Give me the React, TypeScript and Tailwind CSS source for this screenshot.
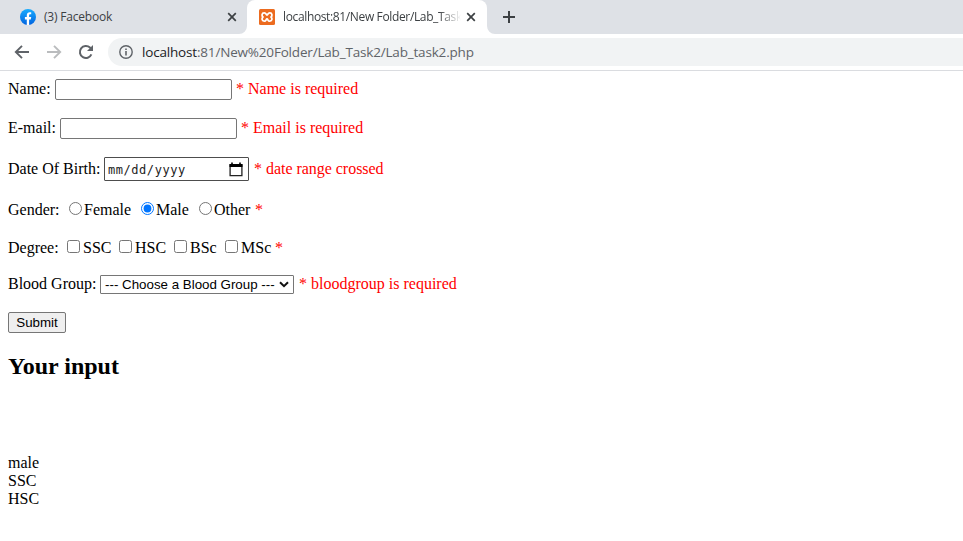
import type { ReactNode } from 'react';

function Row({ className, children }: { className: string; children: ReactNode }) {
  return <div className={`flex whitespace-pre ${className}`}>{children}</div>;
}

function CloseIcon() {
  return (
    <svg width="10" height="10" viewBox="0 0 10 10" className="shrink-0">
      <path d="M1.2 1.2 8.8 8.8M8.8 1.2 1.2 8.8" stroke="#3c4043" strokeWidth="1.7" fill="none" />
    </svg>
  );
}

function FacebookIcon() {
  return (
    <svg width="16" height="16" viewBox="0 0 16 16" className="shrink-0">
      <defs>
        <linearGradient id="fb" x1="0" y1="0" x2="0" y2="1">
          <stop offset="0" stopColor="#18acfe" />
          <stop offset="1" stopColor="#0163e0" />
        </linearGradient>
      </defs>
      <circle cx="8" cy="8" r="8" fill="url(#fb)" />
      <path d="M6.8 15.9v-5.5H4.9V8h1.9V6.3c0-2 1.2-3.1 2.9-3.1.8 0 1.5.1 1.5.1v1.9h-.9c-1 0-1.2.5-1.2 1.2V8h2.1l-.4 2.4H9.1v5.5Z" fill="#fff" />
    </svg>
  );
}

function XamppIcon() {
  return (
    <svg width="16" height="16" viewBox="0 0 16 16" className="shrink-0">
      <rect width="16" height="16" rx="1.5" fill="#ec6b1f" />
      <path d="M5.2 3.8C2.6 3.8 2.6 7 4 8 2.6 9 2.6 12.2 5.2 12.2 7.4 12.2 6.9 10 8 10S8.6 12.2 10.8 12.2C13.4 12.2 13.4 9 12 8 13.4 7 13.4 3.8 10.8 3.8 8.6 3.8 9.1 6 8 6S7.4 3.8 5.2 3.8Z" fill="none" stroke="#fff" strokeWidth="1.8" strokeLinejoin="round" />
    </svg>
  );
}

function Toolbar() {
  return (
    <div className="flex h-[37px] items-start border-b border-[#dadce0] bg-white pt-1">
      <svg width="108" height="28" viewBox="0 0 108 28" fill="none" className="shrink-0">
        <path d="M29 14H16.5M22 7.8 15.8 14l6.2 6.2" stroke="#5f6368" strokeWidth="1.9" />
        <path d="M47 14h12.5M54 7.8l6.2 6.2-6.2 6.2" stroke="#babcbe" strokeWidth="1.9" />
        <path d="M91.4 16.4A6 6 0 1 1 90 9.6l1.3 1.3" stroke="#5f6368" strokeWidth="2" />
        <path d="M93 7v6h-6Z" fill="#5f6368" />
      </svg>
      <div className="flex h-7 flex-1 items-center rounded-l-full bg-[#f1f3f4] pl-[11px]">
        <svg width="14" height="14" viewBox="0 0 14 14" className="shrink-0">
          <circle cx="7" cy="7" r="6.2" fill="none" stroke="#5f6368" strokeWidth="1.4" />
          <path d="M6.2 6h1.6v4.4H6.2zM6.2 3.4h1.6V5H6.2z" fill="#5f6368" />
        </svg>
        <span className="ml-[9px] whitespace-pre font-['Open_Sans','Noto_Sans',sans-serif] text-[13.5px] leading-[20px] tracking-[-0.18px] text-[#5f6368]">
          <span className="text-[#202124]">localhost</span>:81/New%20Folder/Lab_Task2/Lab_task2.php
        </span>
      </div>
    </div>
  );
}

function TabStrip() {
  return (
    <div className="flex h-[34px] bg-[#dee1e6] font-['Open_Sans','Noto_Sans',sans-serif] text-[12px] leading-[16px] text-[#3c4043]">
      <div className="flex w-[247px] items-center bg-[#dee1e6] pr-[10px] pl-5">
        <FacebookIcon />
        <span className="ml-2 flex-1 whitespace-pre tracking-[-0.2px]">(3) Facebook</span>
        <CloseIcon />
      </div>
      <div className="relative flex w-[240px] items-center rounded-t-lg bg-white pr-[11px] pl-3">
        <svg width="8" height="8" className="absolute bottom-0 -left-2"><path d="M8 0v8H0a8 8 0 0 0 8-8Z" fill="#fff" /></svg>
        <XamppIcon />
        <span className="ml-2 whitespace-pre tracking-[-0.36px] [mask-image:linear-gradient(to_right,black_156px,transparent_178px)]">localhost:81/New Folder/Lab_Task</span>
        <span className="ml-auto flex"><CloseIcon /></span>
        <svg width="8" height="8" className="absolute -right-2 bottom-0"><path d="M0 0v8h8a8 8 0 0 1-8-8Z" fill="#fff" /></svg>
      </div>
      <svg width="12" height="12" viewBox="0 0 12 12" className="mt-[11px] ml-4">
        <path d="M6 0v12M0 6h12" stroke="#3c4043" strokeWidth="2" />
      </svg>
    </div>
  );
}

const genders = [
  { label: 'Female', box: 'w-[72px]' },
  { label: 'Male', box: 'w-[58px]' },
  { label: 'Other', box: 'w-[56px]' },
];
const degrees = [
  { label: 'SSC', box: 'w-[52px]' },
  { label: 'HSC', box: 'w-[55px]' },
  { label: 'BSc', box: 'w-[51px]' },
  { label: 'MSc', box: 'w-[50px]' },
];

function LabForm() {
  return (
    <form className="pl-2">
      <Row className="mt-2 h-[21px]">
        <span className="w-[47px] pt-px">Name:</span>
        <input type="text" aria-label="Name" className="h-[21px] w-[177px] rounded-[2px] border border-[#767676] bg-white" />
        <span className="pt-px pl-1 text-[#ff0000]">* Name is required</span>
      </Row>
      <Row className="mt-[18px] h-[21px]">
        <span className="w-[52px] pt-px">E-mail:</span>
        <input type="text" aria-label="E-mail" className="h-[21px] w-[177px] rounded-[2px] border border-[#767676] bg-white" />
        <span className="pt-px pl-1 text-[#ff0000]">* Email is required</span>
      </Row>
      <Row className="mt-[18px] h-6">
        <span className="w-24 pt-[3px]">Date Of Birth:</span>
        <span className="flex h-6 w-[145px] items-center justify-between rounded-[1px] border border-[#4d4d4d] pr-[5px] pl-[3px]">
          <span className="pt-[2px] font-['DejaVu_Sans_Mono',monospace] text-[12px] tracking-[0.55px] text-[#222]">mm/dd/yyyy</span>
          <svg width="14" height="15" viewBox="0 0 14 15"><path d="M1.1 3v10.6h11.8V3Z" fill="none" stroke="#222" strokeWidth="1.3" /><path d="M.5 2h13v3H.5zM2.2.5h1.6V3H2.2zM10.2.5h1.6V3h-1.6z" fill="#000" /></svg>
        </span>
        <span className="pt-[3px] pl-[5px] tracking-[-0.03px] text-[#ff0000]">* date range crossed</span>
      </Row>
      <Row className="mt-5 h-[18px]">
        <span className="w-[61px]">Gender:</span>
        {genders.map(({ label, box }) => (
          <label key={label} className={`flex ${box}`}>
            <input type="radio" name="gender" defaultChecked={label === 'Male'} className="mt-px mr-[2px] h-[13px] w-[13px]" />{label}
          </label>
        ))}
        <span className="text-[#ff0000]">*</span>
      </Row>
      <Row className="mt-5 h-[18px]">
        <span className="w-[59px]">Degree:</span>
        {degrees.map(({ label, box }) => (
          <label key={label} className={`flex ${box}`}>
            <input type="checkbox" className="mt-px mr-[3px] h-[13px] w-[13px]" />{label}
          </label>
        ))}
        <span className="text-[#ff0000]">*</span>
      </Row>
      <Row className="mt-[18px] h-[19px]">
        <span className="w-[92px]">Blood Group:</span>
        <span className="flex h-[19px] w-[194px] items-center rounded-[1px] border border-[#767676] pl-1 font-['Liberation_Sans',Arial,sans-serif] text-[13.333px] leading-[17px]">
          --- Choose a Blood Group ---
          <svg width="10" height="7" viewBox="0 0 10 7" className="ml-auto mr-1"><path d="m1 1.2 4 4 4-4" fill="none" stroke="#111" strokeWidth="2" /></svg>
        </span>
        <span className="pl-[5px] text-[#ff0000]">* bloodgroup is required</span>
      </Row>
      <button type="button" className="mt-[18px] block h-[21px] w-[58px] rounded-[2px] border border-[#767676] bg-[#efefef] font-['Liberation_Sans',Arial,sans-serif] text-[13.333px] leading-[19px]">Submit</button>
    </form>
  );
}

export default function App() {
  return (
    <div className="h-[541px] w-[963px] overflow-hidden bg-white">
      <TabStrip />
      <Toolbar />
      <main className="font-['Liberation_Serif','Times_New_Roman',serif] text-[16px] leading-[18px] text-black">
        <LabForm />
        <h2 className="mt-5 pl-2 text-[24px] leading-[27px] font-bold">Your input</h2>
        <div className="mt-[74px] pl-2">
          <p>male</p>
          <p>SSC</p>
          <p>HSC</p>
        </div>
      </main>
    </div>
  );
}
